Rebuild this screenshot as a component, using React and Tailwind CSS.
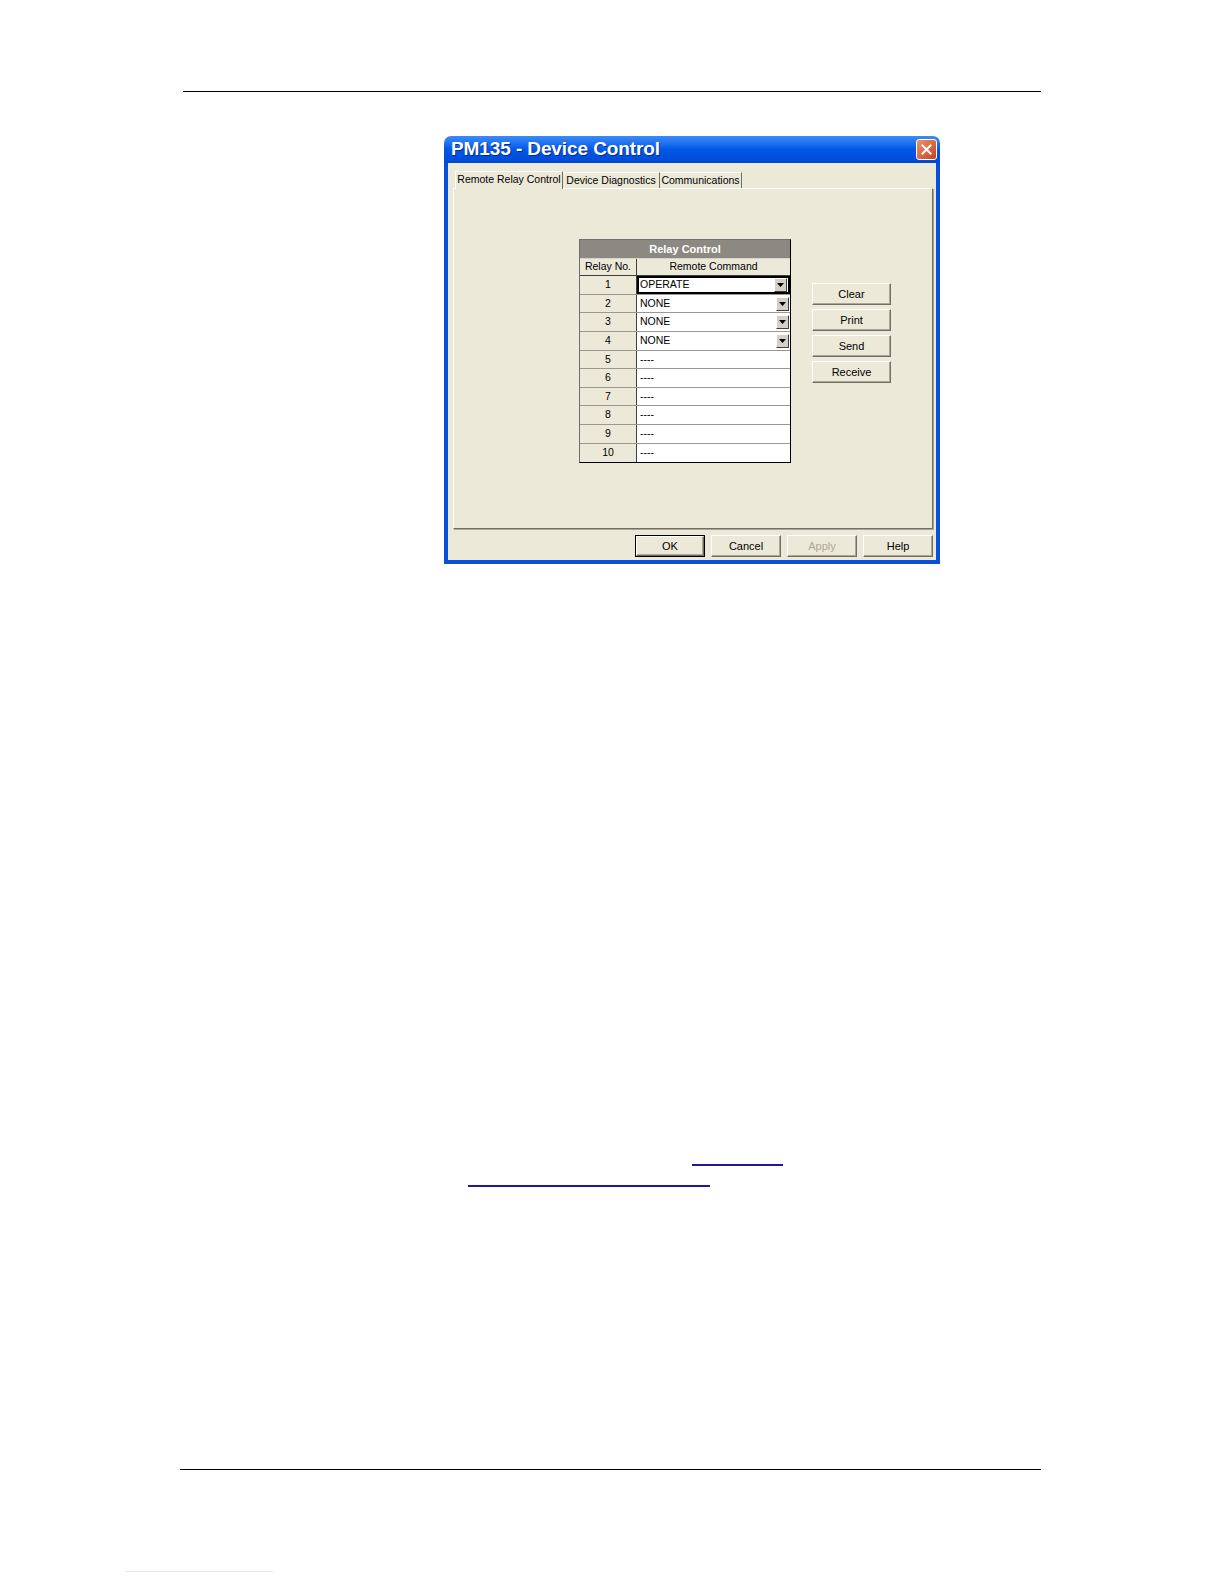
import React from "react";

const font = { fontFamily: '"Liberation Sans", Arial, sans-serif' };

const rows = [
  { n: 1, v: "OPERATE", drop: true, focus: true, h: "h-[19px]" },
  { n: 2, v: "NONE", drop: true, h: "h-[18px]" },
  { n: 3, v: "NONE", drop: true, h: "h-[19px]" },
  { n: 4, v: "NONE", drop: true, h: "h-[19px]" },
  { n: 5, v: "----", h: "h-[18px]" },
  { n: 6, v: "----", h: "h-[19px]" },
  { n: 7, v: "----", h: "h-[18px]" },
  { n: 8, v: "----", h: "h-[19px]" },
  { n: 9, v: "----", h: "h-[19px]" },
  { n: 10, v: "----", h: "h-[18px]" },
];

const DropArrow = () => (
  <div className="w-[13px] h-[14px] mr-[1px] bg-[#D4D0C8] border border-t-white border-l-white border-b-[#404040] border-r-[#404040] flex items-center justify-center">
    <svg width="7" height="4" viewBox="0 0 7 4">
      <polygon points="0,0 7,0 3.5,4" fill="#000" />
    </svg>
  </div>
);

const WinButton = ({ children, disabled, isDefault, className = "" }) => (
  <div
    className={`${className} ${
      isDefault ? "border border-black" : ""
    } box-border`}
  >
    <div
      className={`h-full w-full flex items-center justify-center text-[11px] bg-[#ECE9D8] border border-t-white border-l-white border-b-[#716F64] border-r-[#716F64] shadow-[inset_-1px_-1px_0_#ACA899] ${
        disabled ? "text-[#ACA899]" : "text-black"
      }`}
    >
      {children}
    </div>
  </div>
);

const RelayTable = () => (
  <div className="w-[212px] border border-[#6F6F6F] border-b-black border-r-black bg-[#ECE9D8]">
    <div className="h-[19px] bg-[#8C8982] border-b border-[#D8D5CC] flex items-center justify-center text-white font-bold text-[11px]">
      Relay Control
    </div>
    <div className="h-[17px] flex text-[10.5px] border-b border-[#404040]">
      <div className="w-[57px] border-r border-[#404040] flex items-center justify-center">
        Relay No.
      </div>
      <div className="flex-1 flex items-center justify-center">
        Remote Command
      </div>
    </div>
    {rows.map((r, i) => (
      <div
        key={r.n}
        className={`${r.h} flex text-[10.5px] ${
          i < rows.length - 1 ? "border-b border-[#9A9890]" : ""
        }`}
      >
        <div className="w-[57px] border-r border-[#404040] flex items-center justify-center bg-[#ECE9D8]">
          {r.n}
        </div>
        <div
          className={`flex-1 bg-white flex items-center ${
            r.focus ? "border-2 border-black pl-[1px]" : "pl-[3px]"
          }`}
        >
          <span className="flex-1">{r.v}</span>
          {r.drop && <DropArrow />}
        </div>
      </div>
    ))}
  </div>
);

const Dialog = () => (
  <div className="w-[496px] flex flex-col">
    {/* title bar */}
    <div className="h-[27px] rounded-t-[7px] bg-gradient-to-b from-[#3B8CF7] via-[#0058E8] to-[#0048D6] flex items-center justify-between pl-[7px] pr-[3px]">
      <span className="text-white font-bold text-[19px] tracking-[-0.1px] [text-shadow:1px_1px_0_#0B2A8A]">
        PM135 - Device Control
      </span>
      <div className="w-[21px] h-[21px] rounded-[3px] border border-white bg-gradient-to-br from-[#EA9270] to-[#C5401A] flex items-center justify-center">
        <svg width="11" height="11" viewBox="0 0 11 11">
          <path
            d="M1.5 1.5 L9.5 9.5 M9.5 1.5 L1.5 9.5"
            stroke="#fff"
            strokeWidth="2"
            strokeLinecap="square"
          />
        </svg>
      </div>
    </div>
    {/* body */}
    <div className="bg-[#ECE9D8] border-x-4 border-b-4 border-[#0A4FDA] pb-[3px]">
      {/* tabs */}
      <div className="flex items-end pl-[7px] pt-[7px] h-[25px] text-[10.5px]">
        <div className="h-[18px] w-[108px] bg-[#ECE9D8] border-t border-l border-white border-r border-r-[#716F64] flex items-center justify-center relative z-10 -mb-px pb-[2px]">
          Remote Relay Control
        </div>
        <div className="h-[16px] w-[97px] border-t border-white border-r border-r-[#716F64] flex items-center justify-center">
          Device Diagnostics
        </div>
        <div className="h-[16px] w-[82px] border-t border-white border-r border-r-[#716F64] flex items-center justify-center">
          Communications
        </div>
      </div>
      {/* panel */}
      <div className="ml-[5px] mr-[3px] h-[341px] border border-t-white border-l-white border-r-[#716F64] border-b-[#716F64] shadow-[1px_1px_0_#ACA899] flex items-start pl-[125px] pt-[50px]">
        <RelayTable />
        <div className="ml-[21px] mt-[44px] flex flex-col gap-[4px]">
          <WinButton className="w-[79px] h-[22px]">Clear</WinButton>
          <WinButton className="w-[79px] h-[22px]">Print</WinButton>
          <WinButton className="w-[79px] h-[22px]">Send</WinButton>
          <WinButton className="w-[79px] h-[22px]">Receive</WinButton>
        </div>
      </div>
      {/* bottom buttons */}
      <div className="flex justify-end gap-[6px] mt-[6px] pr-[3px]">
        <WinButton isDefault className="w-[70px] h-[22px]">
          OK
        </WinButton>
        <WinButton className="w-[70px] h-[22px]">Cancel</WinButton>
        <WinButton disabled className="w-[70px] h-[22px]">
          Apply
        </WinButton>
        <WinButton className="w-[70px] h-[22px]">Help</WinButton>
      </div>
    </div>
  </div>
);

export default function App() {
  return (
    <div className="w-[1224px] h-[1584px] bg-white flex flex-col" style={font}>
      <div className="mt-[91px] ml-[183px] w-[858px] h-px bg-black" />
      <div className="ml-[444px] mt-[44px]">
        <Dialog />
      </div>
      <div className="mt-[600px] flex flex-col">
        <div className="ml-[692px] w-[91px] h-[2px] bg-[#1B1B9C]" />
        <div className="ml-[468px] mt-[19px] w-[242px] h-[2px] bg-[#1B1B9C]" />
      </div>
      <div className="mt-[282px] ml-[180px] w-[861px] h-px bg-black" />
      <div className="mt-[101px] ml-[125px] w-[148px] h-px bg-[#E4EAF2]" />
    </div>
  );
}
